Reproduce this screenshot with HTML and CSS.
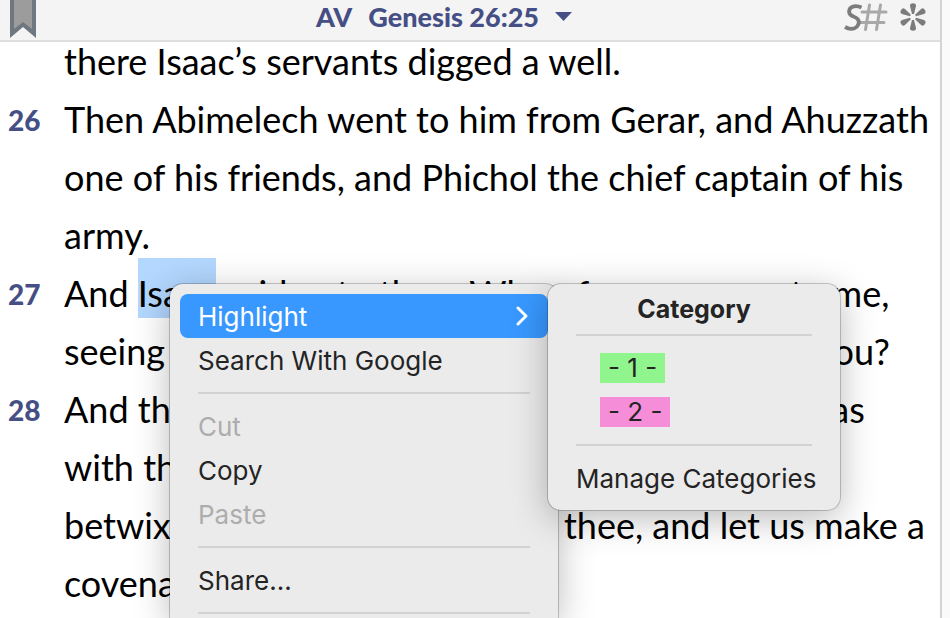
FILE: index.html
```html
<!DOCTYPE html>
<html lang="en">
<head>
    <meta charset="UTF-8">
    <meta name="viewport" content="width=device-width, initial-scale=1.0">
    <title>Genesis 26:25</title>
    <link rel="stylesheet" href="styles.css">
</head>
<body>

    <div class="reader">
        <header class="toolbar">
            <button class="tool bookmark" aria-label="Bookmark">
                <svg width="26" height="38" viewBox="0 0 26 38">
                    <path d="M0 0H26V38L13 27L0 38Z" fill="#6f7780"/>
                    <path d="M4 0H22V29L13 22L4 29Z" fill="#9c9c9c"/>
                </svg>
            </button>
            <button class="reference">
                <span>AV</span>
                <span>Genesis 26:25</span>
                <svg width="17" height="9" viewBox="0 0 17 9"><path d="M0 0H17L8.500 9Z" fill="#454f85"/></svg>
            </button>
            <div class="tools">
                <button class="tool" aria-label="Strong's numbers">
                    <svg width="44" height="30" viewBox="0 0 44 30" fill="none">
                        <path d="M18 10H42M16 20.500H40M25.500 3L21.500 27.500M36.500 3L32.500 27.500" stroke="#a8a8a8" stroke-width="3" stroke-linecap="round"/>
                        <path d="M17.500 5.500C14.500 4 10.500 3.800 8 5C4.500 6.800 4 11.500 7.500 13.500C9.500 14.600 12.500 15.500 14 17.500C16 20.500 14 25 10.500 26.300C7.500 27.300 4 26.800 1 25" stroke="#7c7c7c" stroke-width="3.800"/>
                    </svg>
                </button>
                <button class="tool" aria-label="Notes">
                    <svg width="26" height="28" viewBox="-13 -14 26 28" fill="#7c7c7c">
                        <path id="petal" d="M-1 -3L-3 -11Q-3.200 -13.800 0 -13.800Q3.200 -13.800 3 -11L1 -3Z"/>
                        <use href="#petal" transform="rotate(60)"/>
                        <use href="#petal" transform="rotate(120)"/>
                        <use href="#petal" transform="rotate(180)"/>
                        <use href="#petal" transform="rotate(240)"/>
                        <use href="#petal" transform="rotate(300)"/>
                    </svg>
                </button>
            </div>
        </header>

        <main class="passage">
            <div class="verse">
                <span class="number"></span>
                <p>there Isaac’s servants digged a well.</p>
            </div>
            <div class="verse">
                <span class="number">26</span>
                <p>Then Abimelech went to him from Gerar, and Ahuzzath<br>one of his friends, and Phichol the chief captain of his<br>army.</p>
            </div>
            <div class="verse">
                <span class="number">27</span>
                <p>And <mark>Isaac</mark> said unto them Wherefore come ye to me,<br>seeing ye hate me and have sent me away from you?</p>
            </div>
            <div class="verse">
                <span class="number">28</span>
                <p>And they said We saw certainly that the LORD was<br>with thee: and we said, Let there be now an oath<br>betwixt us even betwixt us and thee, and let us make a<br>covenant with thee;</p>
            </div>
        </main>
    </div>

    <div class="menu context-menu">
        <button class="item active">
            Highlight
            <svg width="12" height="20" viewBox="0 0 12 20"><path d="M2 2L10 10L2 18" fill="none" stroke="#fff" stroke-width="3" stroke-linecap="round" stroke-linejoin="round"/></svg>
        </button>
        <button class="item">Search With Google</button>
        <hr>
        <button class="item" disabled>Cut</button>
        <button class="item">Copy</button>
        <button class="item" disabled>Paste</button>
        <hr>
        <button class="item">Share...</button>
        <hr>
    </div>

    <div class="menu category-menu">
        <h2>Category</h2>
        <hr>
        <button class="item category"><span class="green">- 1 -</span></button>
        <button class="item category"><span class="pink">- 2 -</span></button>
        <hr>
        <button class="item">Manage Categories</button>
    </div>

</body>
</html>
```
FILE: styles.css
```css
:root {
    --accent: #454f85;
    --menu-bg: #ebebeb;
    --menu-text: #242424;
    --selection: #b3d7ff;
}

* {
    box-sizing: border-box;
}

body {
    margin: 0;
    height: 100vh;
    overflow: hidden;
    position: relative;
    background: #fafafa;
    font-family: Lato, sans-serif;
}

button {
    border: 0;
    padding: 0;
    background: none;
    font: inherit;
    color: inherit;
}

/* Reading pane */
.reader {
    height: 100%;
    margin-right: 8px;
    border-right: 2px solid #d4d4d4;
    background: #fff;
    overflow: hidden;
}

.toolbar {
    position: relative;
    z-index: 1;
    display: grid;
    grid-template-columns: 1fr auto 1fr;
    height: 42px;
    padding: 0 14px 0 10px;
    background: #f4f4f4;
    border-bottom: 2px solid #dedede;
}

.tool {
    display: flex;
}

.bookmark {
    align-self: start;
}

.reference {
    display: flex;
    align-items: center;
    gap: 16px;
    height: 32px;
    margin-right: 48px;
    color: var(--accent);
    font-size: 27px;
    font-weight: 900;
}

.tools {
    display: flex;
    justify-content: flex-end;
    align-items: center;
    gap: 12px;
    height: 34px;
}

.passage {
    margin-top: -10px;
    font-size: 36px;
    line-height: 58px;
    color: #000;
    white-space: nowrap;
}

.verse {
    display: grid;
    grid-template-columns: 56px 1fr;
    padding-left: 8px;
}

.verse p {
    margin: 0;
}

.number {
    color: var(--accent);
    font-size: 28px;
    font-weight: 900;
    line-height: 60px;
}

mark {
    padding: 13px 0 3px;
    background: var(--selection);
    color: inherit;
}

/* Menus */
.menu {
    position: absolute;
    top: 284px;
    padding: 10px;
    background: var(--menu-bg);
    border-radius: 13px;
    box-shadow: 0 0 0 1px rgba(0, 0, 0, 0.2), 0 8px 36px rgba(0, 0, 0, 0.28);
    color: var(--menu-text);
    font-family: Inter, sans-serif;
    font-size: 26px;
}

.context-menu {
    left: 170px;
    bottom: 0;
    width: 388px;
    padding-bottom: 0;
    border-bottom-left-radius: 0;
    border-bottom-right-radius: 0;
    overflow: hidden;
}

.category-menu {
    left: 548px;
    width: 292px;
}

.menu h2 {
    margin: 0;
    font-size: 25px;
    font-weight: 700;
    line-height: 30px;
    text-align: center;
}

.menu hr {
    height: 2px;
    margin: 10px 18px;
    border: 0;
    background: #d2d2d2;
}

.item {
    display: flex;
    align-items: center;
    justify-content: space-between;
    width: 100%;
    height: 44px;
    padding: 0 20px 0 18px;
    border-radius: 8px;
    white-space: nowrap;
}

.item:disabled {
    color: #adadad;
}

.item.active {
    background: #3898ff;
    color: #fff;
}

.category {
    padding-left: 42px;
}

.category span {
    padding: 0 8px;
    line-height: 30px;
}

.green {
    background: #90f58d;
}

.pink {
    background: #f58dd8;
}
```
